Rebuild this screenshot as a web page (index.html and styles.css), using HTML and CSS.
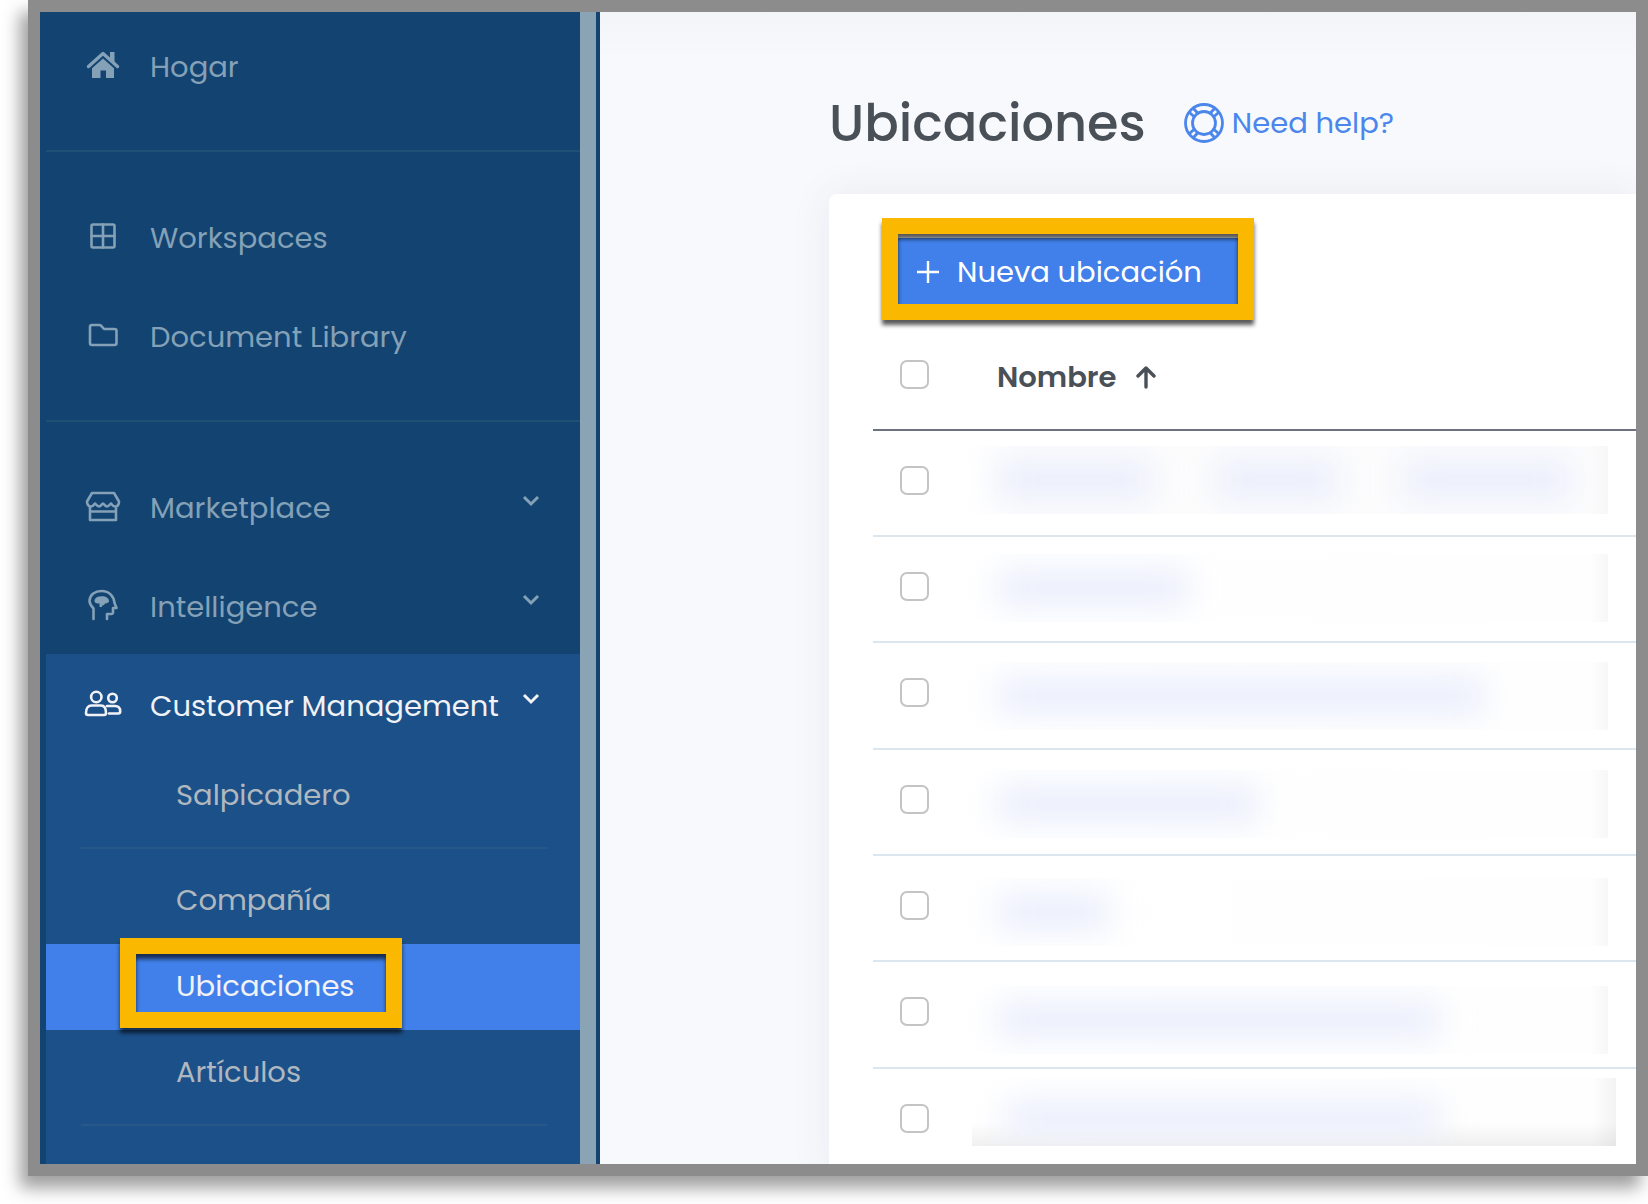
FILE: index.html
```html
<!DOCTYPE html>
<html lang="es">
<head>
<meta charset="utf-8">
<title>Ubicaciones</title>
<link rel="stylesheet" href="styles.css">
</head>
<body>
<div class="frame">
  <aside class="sidebar">
    <nav class="nav">
      <a class="nav-item" href="#">
        <svg class="icon" viewBox="0 0 36 36"><path d="M3.500 19.500 18 6.500 32.500 19.500" fill="none" stroke="currentColor" stroke-width="3.400" stroke-linecap="round" stroke-linejoin="round"/><path d="M25 5h4.500v11L25 12z" fill="currentColor"/><path d="M18 11.500 29 21.200V31h-8v-7.500h-5.500V31H7V21.200z" fill="currentColor"/></svg>
        <span class="nav-label">Hogar</span>
      </a>
      <hr class="divider">
      <a class="nav-item" href="#">
        <svg class="icon outline" viewBox="0 0 36 36"><rect x="6.500" y="6.500" width="23" height="23" rx="1.500"/><path d="M18 6.500v23M6.500 18h23"/></svg>
        <span class="nav-label">Workspaces</span>
      </a>
      <a class="nav-item" href="#">
        <svg class="icon outline" viewBox="0 0 36 36"><path d="M5 10a2 2 0 0 1 2-2h7.500a2 2 0 0 1 1.500.7l3 3.300H29.500a2 2 0 0 1 2 2V26a2 2 0 0 1-2 2H7a2 2 0 0 1-2-2z"/></svg>
        <span class="nav-label">Document Library</span>
      </a>
      <hr class="divider">
      <a class="nav-item" href="#">
        <svg class="icon outline" viewBox="0 0 36 36"><path d="M7 5h22l5 8.500c0 3-1.500 5-4 5s-3.500-3-4-3-2 3-4 3-3-3-4-3-2 3-4 3-3.500-3-4-3-1.500 3-4 3-4-2-4-5zM5 18.500V32h26V18.500M5 23.500h26"/></svg>
        <span class="nav-label">Marketplace</span>
        <svg class="chevron" viewBox="0 0 18 12"><path d="M2 2l7 7 7-7"/></svg>
      </a>
      <a class="nav-item" href="#">
        <svg class="icon outline" viewBox="0 0 36 36"><path d="M8.500 32V21.500C6 19 4.500 17 4.500 13.500 5 7.500 10 4 16.500 4c8 0 12.500 5.500 13 12l2 5h-3.500v4.500a1.500 1.500 0 0 1-1.500 1.500H22v5"/><path class="solid" d="M9.500 14c0-2.500 2.500-4.500 5.500-4.500 4-1 9 1 9 4.500 0 1.500-1.500 2.500-4 2.500-1 2-2 2-3 2V20h-2.500v-3.500c-2.500 0-5-.5-5-2.500z"/></svg>
        <span class="nav-label">Intelligence</span>
        <svg class="chevron" viewBox="0 0 18 12"><path d="M2 2l7 7 7-7"/></svg>
      </a>
      <div class="group">
        <a class="nav-item open" href="#">
          <svg class="icon outline" viewBox="0 0 36 36"><circle cx="11.300" cy="11" r="5.200"/><circle cx="27.500" cy="12" r="4.300"/><path d="M6.500 19.500H16c3 0 5 2.500 5 7.500 0 1.500-.5 2-2 2H3c-1.500 0-2-.5-2-2 0-5 2.500-7.500 5.500-7.500zM22 20h8c3.500 0 5.200 2 5.200 5.500 0 1.500-.7 2-2 2H24"/></svg>
          <span class="nav-label">Customer Management</span>
          <svg class="chevron" viewBox="0 0 18 12"><path d="M2 2l7 7 7-7"/></svg>
        </a>
        <a class="sub-item" href="#">Salpicadero</a>
        <hr class="sub-divider">
        <a class="sub-item" href="#">Compañía</a>
        <a class="sub-item active" href="#">Ubicaciones<span class="marker marker-nav"></span></a>
        <a class="sub-item" href="#">Artículos</a>
        <hr class="sub-divider">
      </div>
    </nav>
    <div class="scroll-track"></div>
  </aside>

  <main class="main">
    <header class="page-head">
      <h1 class="title">Ubicaciones</h1>
      <a class="help" href="#">
        <svg class="help-icon" viewBox="0 0 40 40"><circle cx="20" cy="20" r="18.500"/><circle cx="20" cy="20" r="11.500"/><path d="M5.500 9.500l5.500 5M9.500 5.500l5 5.500M34.500 9.500l-5.500 5M30.500 5.500l-5 5.500M5.500 30.500l5.500-5M9.500 34.500l5-5.500M34.500 30.500l-5.500-5M30.500 34.500l-5-5.500"/></svg>
        <span>Need help?</span>
      </a>
    </header>
    <section class="card">
      <div class="toolbar">
        <button class="new-btn" type="button">
          <svg class="plus" viewBox="0 0 22 22"><path d="M11 0v22M0 11h22"/></svg>
          <span>Nueva ubicación</span>
        </button>
        <span class="marker marker-btn"></span>
      </div>
      <div class="list">
        <table class="table">
          <thead>
            <tr>
              <th class="check-cell"><input class="check" type="checkbox" aria-label="Seleccionar todo"></th>
              <th class="name-cell"><span class="sort">Nombre <svg class="arrow" viewBox="0 0 20 24"><path d="M10 22V3M2 11l8-8 8 8"/></svg></span></th>
            </tr>
          </thead>
          <tbody>
            <tr><td class="check-cell"><input class="check" type="checkbox" aria-label="Seleccionar fila 1"></td><td></td></tr>
            <tr><td class="check-cell"><input class="check" type="checkbox" aria-label="Seleccionar fila 2"></td><td></td></tr>
            <tr><td class="check-cell"><input class="check" type="checkbox" aria-label="Seleccionar fila 3"></td><td></td></tr>
            <tr><td class="check-cell"><input class="check" type="checkbox" aria-label="Seleccionar fila 4"></td><td></td></tr>
            <tr><td class="check-cell"><input class="check" type="checkbox" aria-label="Seleccionar fila 5"></td><td></td></tr>
            <tr><td class="check-cell"><input class="check" type="checkbox" aria-label="Seleccionar fila 6"></td><td></td></tr>
            <tr><td class="check-cell"><input class="check" type="checkbox" aria-label="Seleccionar fila 7"></td><td></td></tr>
          </tbody>
        </table>
        <div class="redactions" aria-hidden="true">
          <div class="patch tinted"><i style="width:154px"></i><i style="width:120px"></i><i style="width:168px"></i></div>
          <div class="patch"><i style="width:192px"></i></div>
          <div class="patch"><i style="width:487px"></i></div>
          <div class="patch"><i style="width:262px"></i></div>
          <div class="patch"><i style="width:112px"></i></div>
          <div class="patch"><i style="width:442px"></i></div>
          <div class="patch last"><i style="width:435px"></i></div>
        </div>
      </div>
    </section>
  </main>
</div>
</body>
</html>
```

FILE: styles.css
```css
* { box-sizing: border-box; }

body {
  margin: 0;
  padding: 0 0 28px 28px;
  background: #fff;
  overflow: hidden;
  font-family: Poppins, Inter, "Liberation Sans", sans-serif;
  font-size: 29px;
  line-height: 40px;
}

a { color: inherit; text-decoration: none; }

.frame {
  display: flex;
  height: calc(100vh - 28px);
  border: 12px solid #8c8c8c;
  box-shadow: -8px 12px 16px rgba(0, 0, 0, 0.38);
  clip-path: inset(0 0 -28px -28px);
}

/* Sidebar */
.sidebar {
  display: flex;
  flex: none;
  width: 560px;
  overflow: hidden;
  background: #134370;
  border-right: 4px solid #134370;
}

.nav {
  display: flex;
  flex-direction: column;
  flex: 1;
  padding: 3px 0 0 6px;
}

.scroll-track { width: 16px; background: #8aa4b6; }

.nav-item {
  display: flex;
  align-items: center;
  flex: none;
  height: 99px;
  padding: 0 40px 0 39px;
  color: #84a1b7;
}

.nav-item.open { color: #f0f2f5; }

.icon { flex: none; width: 36px; height: 36px; margin-right: 29px; overflow: visible; }

.outline {
  fill: none;
  stroke: currentColor;
  stroke-width: 2.6;
  stroke-linejoin: round;
  stroke-linecap: round;
}

.outline .solid { fill: currentColor; stroke: none; }

.nav-label { flex: 1; padding-top: 4px; white-space: nowrap; }

.chevron {
  flex: none;
  width: 18px;
  height: 12px;
  margin-bottom: 10px;
  fill: none;
  stroke: currentColor;
  stroke-width: 3;
}

.divider {
  flex: none;
  width: 100%;
  height: 2px;
  margin: 36px 0 34px;
  border: 0;
  background: #215076;
}

.group { flex: 1; background: #1c5089; }

.sub-item {
  display: flex;
  align-items: center;
  height: 86px;
  padding: 0 0 2px 130px;
  color: #b0b8bf;
}

.sub-item.active { position: relative; background: #4180ea; color: #f0f2f5; }

.sub-divider {
  height: 2px;
  margin: 8px 33px 9px 35px;
  border: 0;
  background: #28588a;
}

/* Callout frames drawn over the controls */
.marker {
  position: absolute;
  border: 16px solid #fbb800;
  filter: drop-shadow(0 5px 2px rgba(0, 0, 0, 0.65));
  pointer-events: none;
}

.marker-nav { left: 74px; top: -6px; width: 282px; height: 90px; }
.marker-btn { left: -16px; top: -20px; width: 372px; height: 102px; }

/* Main area */
.main {
  display: flex;
  flex-direction: column;
  flex: 1;
  min-width: 0;
  padding: 76px 0 0 229px;
  overflow: hidden;
  background: linear-gradient(#f3f4f7, #f8f9fd 48px);
}

.page-head { display: flex; align-items: center; gap: 38px; height: 70px; margin-bottom: 36px; }

.title { margin: 0; font-size: 51px; line-height: 70px; font-weight: 500; color: #495057; }

.help { display: flex; align-items: center; gap: 8px; color: #4a86ec; }

.help-icon { width: 40px; height: 40px; fill: none; stroke: currentColor; stroke-width: 2.8; }

.card {
  flex: 1;
  padding: 44px 0 0 44px;
  background: #fff;
  border-radius: 8px 0 0 0;
  box-shadow: 0 0 40px rgba(60, 70, 80, 0.08);
}

.toolbar { position: relative; width: max-content; margin-left: 25px; }

.new-btn {
  display: flex;
  align-items: center;
  gap: 18px;
  width: 340px;
  height: 67px;
  padding: 0 19px;
  border: 0;
  background: #4180ea;
  color: #fff;
  font: inherit;
  white-space: nowrap;
}

.plus { flex: none; width: 22px; height: 22px; fill: none; stroke: currentColor; stroke-width: 2.4; }

.list { position: relative; }

.table { width: 100%; border-collapse: collapse; table-layout: fixed; }

.table th, .table td { height: 106px; padding: 0; border-bottom: 2px solid #dce6ee; text-align: left; }

/* Every third row takes up the leftover pixel of the row pitch */
.table tbody tr:nth-child(3n) td { height: 107px; }

.table th { height: 125px; padding-top: 20px; border-color: #6c7280; color: #495057; font-weight: 600; }

.table .check-cell { width: 124px; padding-left: 27px; padding-bottom: 6px; }

.check {
  appearance: none;
  display: block;
  width: 29px;
  height: 29px;
  margin: 0;
  border: 2px solid #c4c4c4;
  border-radius: 7px;
  background: #fff;
}

.sort { display: flex; align-items: center; gap: 20px; }

.arrow { width: 20px; height: 24px; fill: none; stroke: currentColor; stroke-width: 3.4; stroke-linecap: round; stroke-linejoin: round; }

/* Blurred name cells */
.redactions {
  position: absolute;
  top: 141px;
  left: 91px;
  display: flex;
  flex-direction: column;
  gap: 40px;
}

.patch {
  display: flex;
  align-items: center;
  gap: 66px;
  width: 644px;
  height: 68px;
  padding-left: 33px;
  overflow: hidden;
  background: linear-gradient(to left, #f7f7f7, #fefefe 18px, #fff);
}

.patch.tinted { background: linear-gradient(to left, #f7f7f7, #fcfcfd 18px, #fcfcfd 90%, #fff); }

.patch i { flex: none; height: 36px; background: #eaeefc; filter: blur(16px); }

.patch.last {
  margin: -16px 0 0 8px;
  padding-top: 14px;
  background:
    linear-gradient(to top, rgba(0, 0, 0, 0.06), transparent 24px),
    linear-gradient(to left, #f3f3f3, #fefefe 24px, #fff);
}
```
